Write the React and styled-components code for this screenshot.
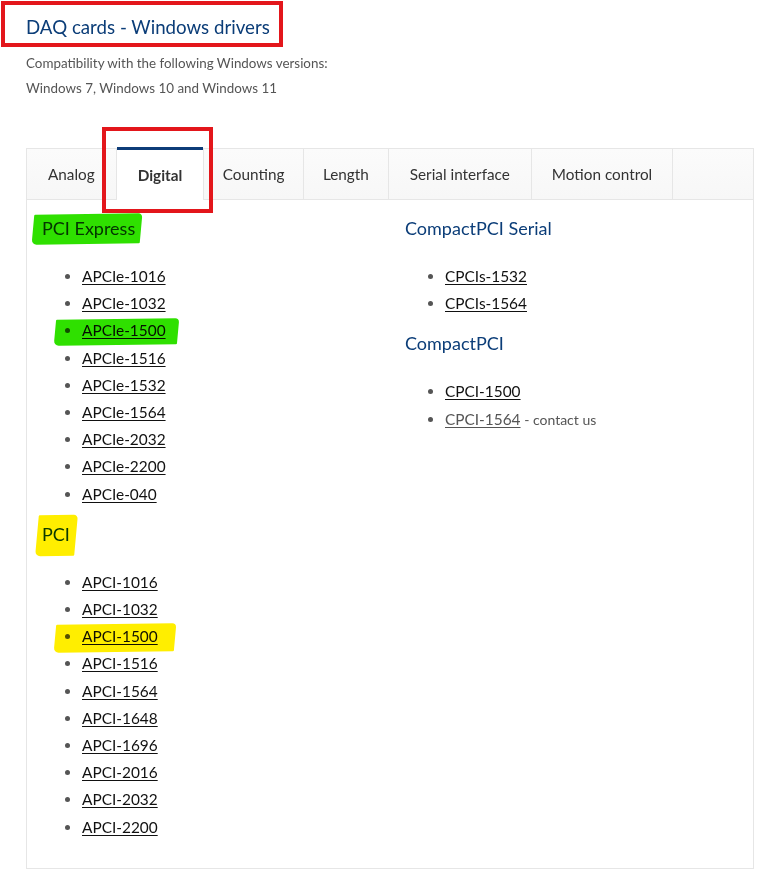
import React from "react";
import styled, { createGlobalStyle, css } from "styled-components";

const Global = createGlobalStyle`
  html, body { margin: 0; padding: 0; background: #fff; }
  body { font-family: "Lato", "Liberation Sans", sans-serif; color: #333; }
`;

const Page = styled.div`
  position: relative;
  width: 763px;
  padding: 12px 9px 19px 26px;
  box-sizing: border-box;
`;

const Title = styled.h2`
  margin: 0;
  font-size: 18.7px;
  line-height: 30px;
  font-weight: 400;
  color: #0b3d78;
`;

const Sub = styled.p`
  margin: 9px 0 0;
  font-size: 13.4px;
  line-height: 25px;
  color: #555;
`;

const Tabs = styled.div`
  margin-top: 47px;
  border: 1px solid #e6e6e6;
`;

const TabBar = styled.div`
  display: flex;
  height: 50px;
  background: linear-gradient(#fbfbfb, #f7f7f7);
  border-bottom: 1px solid #e6e6e6;
`;

const Tab = styled.div`
  position: relative;
  display: flex;
  align-items: center;
  padding: 0 ${(p) => p.$pad}px;
  border-right: 1px solid #e6e6e6;
  font-size: 15.3px;
  color: #333;
  ${(p) =>
    p.$active &&
    css`
      background: #fff;
      font-weight: 700;
      margin-bottom: -1px;
      &::before {
        content: "";
        position: absolute;
        left: 0;
        right: 0;
        top: -2px;
        height: 3px;
        background: #0d3c78;
      }
    `}
`;

const Content = styled.div`
  display: grid;
  grid-template-columns: 363px 1fr;
  padding: 15px 15px 14px 15px;
`;

const Col = styled.div``;

const markCss = css`
  &::after {
    content: "";
    position: absolute;
    left: ${(p) => p.$mark.l}px;
    right: ${(p) => p.$mark.r}px;
    top: ${(p) => p.$mark.t}px;
    bottom: ${(p) => p.$mark.b}px;
    background: ${(p) => p.$mark.c};
    mix-blend-mode: multiply;
    border-radius: 1px 4px 1px 5px;
    transform: skewX(-6deg) rotate(-0.8deg);
    pointer-events: none;
  }
`;

const Heading = styled.h3`
  position: relative;
  display: block;
  width: fit-content;
  margin: 0;
  font-size: 18px;
  line-height: 27px;
  font-weight: 400;
  color: #0b3d78;
  ${(p) => p.$mark && markCss}
`;

const List = styled.ul`
  margin: 21px 0 13px;
  padding-left: 40px;
  list-style: disc;
  color: #555;
`;

const Item = styled.li`
  position: relative;
  font-size: 15.4px;
  line-height: 27.2px;
  ${(p) =>
    p.$mark &&
    css`
      width: fit-content;
    `}
  ${(p) => p.$mark && markCss}
`;

const Link = styled.a`
  color: ${(p) => (p.$muted ? "#555" : "#111")};
  text-decoration: underline;
  text-underline-offset: 2px;
  text-decoration-thickness: 1px;
`;

const Note = styled.span`
  font-size: 14px;
  color: #555;
`;

const RedBox = styled.div`
  position: absolute;
  border: 4px solid #e3161b;
  box-sizing: border-box;
  pointer-events: none;
`;

const GREEN = "#2fe000";
const YELLOW = "#ffee00";

const groups = {
  left: [
    {
      title: "PCI Express",
      mark: { l: -9, r: -6, t: -1, b: -2, c: GREEN },
      items: [
        "APCIe-1016",
        "APCIe-1032",
        { t: "APCIe-1500", mark: { l: -27, r: -12, t: 2, b: -1, c: GREEN } },
        "APCIe-1516",
        "APCIe-1532",
        "APCIe-1564",
        "APCIe-2032",
        "APCIe-2200",
        "APCIe-040",
      ],
    },
    {
      title: "PCI",
      mark: { l: -5, r: -6, t: -6, b: -8, c: YELLOW },
      items: [
        "APCI-1016",
        "APCI-1032",
        { t: "APCI-1500", mark: { l: -27, r: -17, t: 1, b: -2, c: YELLOW } },
        "APCI-1516",
        "APCI-1564",
        "APCI-1648",
        "APCI-1696",
        "APCI-2016",
        "APCI-2032",
        "APCI-2200",
      ],
    },
  ],
  right: [
    { title: "CompactPCI Serial", items: ["CPCIs-1532", "CPCIs-1564"] },
    {
      title: "CompactPCI",
      items: ["CPCI-1500", { t: "CPCI-1564", muted: true, note: " - contact us" }],
    },
  ],
};

const tabs = [
  { t: "Analog", pad: 21 },
  { t: "Digital", pad: 21 },
  { t: "Counting", pad: 18.5 },
  { t: "Length", pad: 19 },
  { t: "Serial interface", pad: 21 },
  { t: "Motion control", pad: 20 },
];

function Group({ g }) {
  return (
    <>
      <Heading $mark={g.mark}>{g.title}</Heading>
      <List>
        {g.items.map((it) => {
          const o = typeof it === "string" ? { t: it } : it;
          return (
            <Item key={o.t} $mark={o.mark}>
              <Link href="#" $muted={o.muted}>{o.t}</Link>
              {o.note && <Note>{o.note}</Note>}
            </Item>
          );
        })}
      </List>
    </>
  );
}

export default function App() {
  return (
    <Page>
      <Global />
      <Title>DAQ cards - Windows drivers</Title>
      <Sub>
        Compatibility with the following Windows versions:
        <br />
        Windows 7, Windows 10 and Windows 11
      </Sub>
      <Tabs>
        <TabBar>
          {tabs.map((t) => (
            <Tab key={t.t} $pad={t.pad} $active={t.t === "Digital"}>{t.t}</Tab>
          ))}
        </TabBar>
        <Content>
          <Col>
            {groups.left.map((g) => (
              <Group key={g.title} g={g} />
            ))}
          </Col>
          <Col>
            {groups.right.map((g) => (
              <Group key={g.title} g={g} />
            ))}
          </Col>
        </Content>
      </Tabs>
      <RedBox style={{ left: 1, top: 1, width: 282, height: 46 }} />
      <RedBox style={{ left: 102, top: 127, width: 111, height: 86 }} />
    </Page>
  );
}
